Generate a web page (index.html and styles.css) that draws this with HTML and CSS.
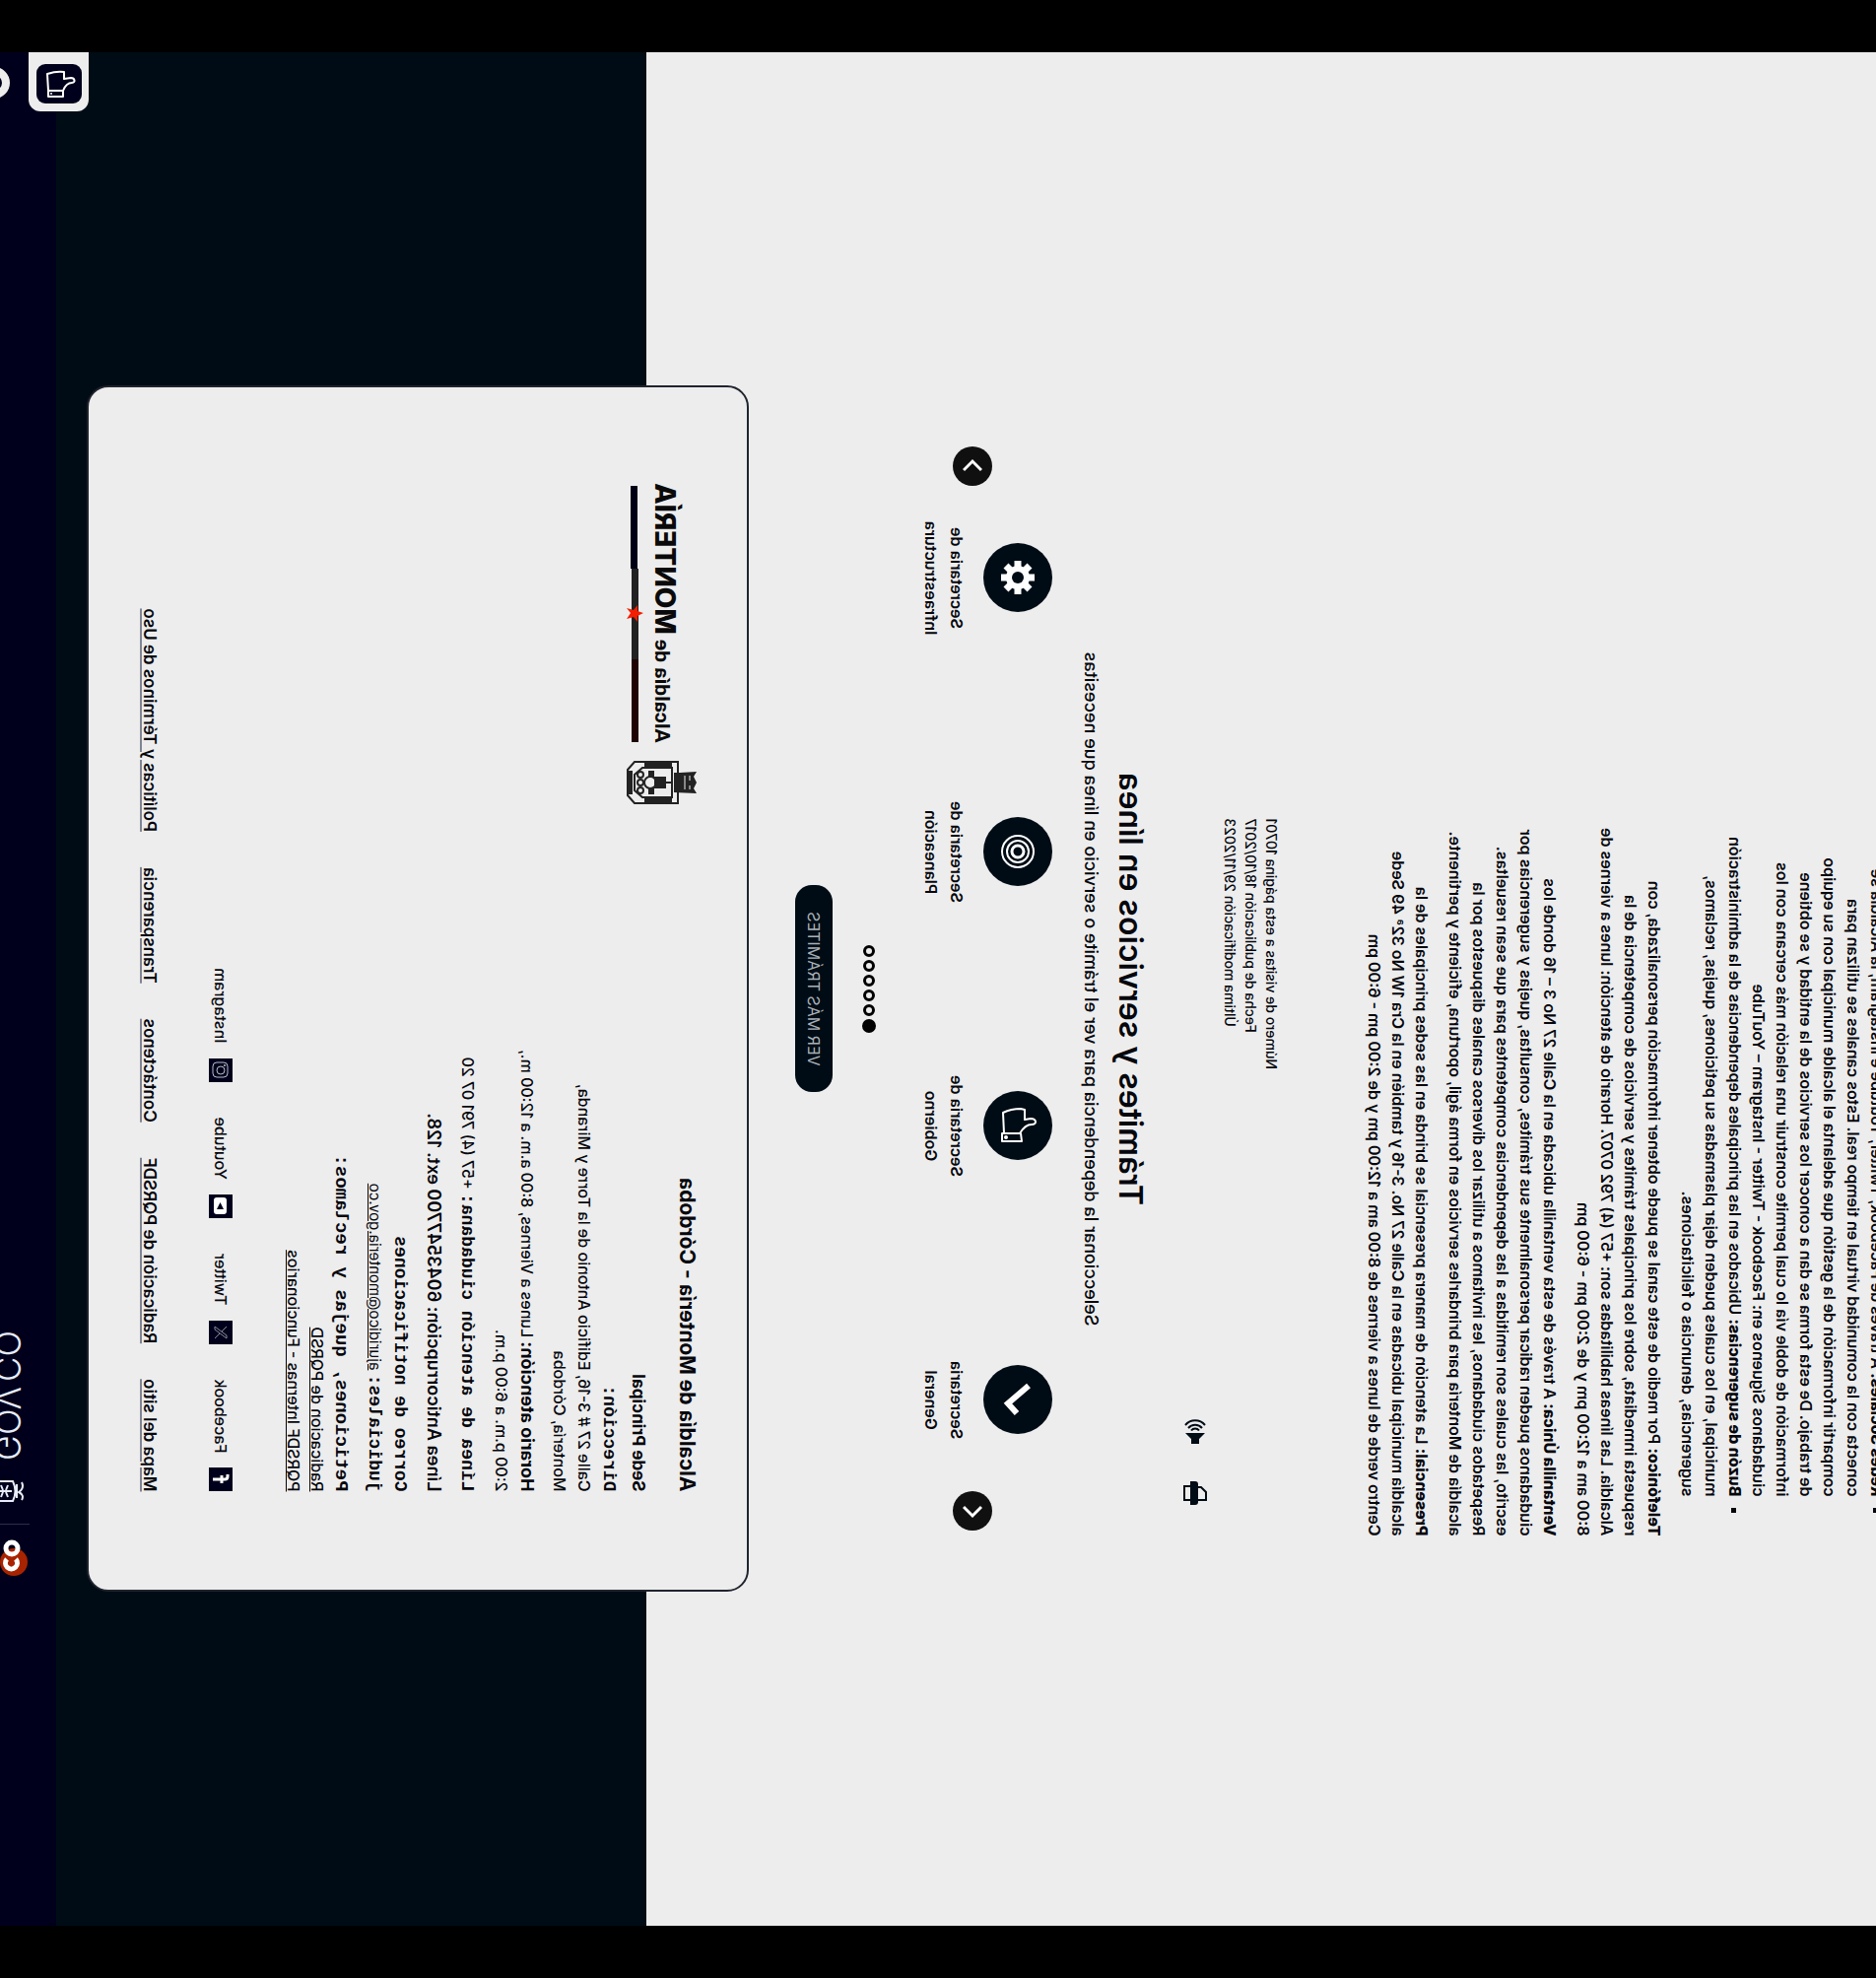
FILE: index.html
```html
<!DOCTYPE html>
<html lang="es">
<head>
<meta charset="utf-8">
<title>Alcaldía de Montería - Canales de atención</title>
<link rel="stylesheet" href="styles.css">
</head>
<body>
<div class="stage">
  <div class="page">
    <main class="main">
      <article class="column article">
        <ul class="channels">
          <li><strong>Redes Sociales:</strong> A través de Facebook, Twitter, Youtube e Instagram, la Alcaldía se<br>conecta con la comunidad virtual en tiempo real. Estos canales se utilizan para<br>compartir información de la gestión que adelanta el alcalde municipal con su equipo<br>de trabajo. De esta forma se dan a conocer los servicios de la entidad y se obtiene<br>información de doble vía lo cual permite construir una relación más cercana con los<br>ciudadanos Síguenos en: Facebook - Twitter - Instagram – YouTube</li>
          <li><strong>Buzón de sugerencias:</strong> Ubicados en las principales dependencias de la administración<br>municipal, en los cuales pueden dejar plasmadas su peticiones, quejas, reclamos,<br>sugerencias, denuncias o felicitaciones.</li>
        </ul>
        <p><strong>Telefónico:</strong> Por medio de este canal se puede obtener información personalizada, con<br>respuesta inmediata, sobre los principales trámites y servicios de competencia de la<br>Alcaldía. Las líneas habilitadas son: +57 (4) 792 0707. Horario de atención: lunes a viernes de<br>8:00 am a 12:00 pm y de 2:00 pm - 6:00 pm</p>
        <p><strong>Ventanilla Única:</strong> A través de esta ventanilla ubicada en la Calle 27 No 3 – 16 donde los<br>ciudadanos pueden radicar personalmente sus trámites, consultas, quejas y sugerencias por<br>escrito, las cuales son remitidas a las dependencias competentes para que sean resueltas.<br>Respetados ciudadanos, les invitamos a utilizar los diversos canales dispuestos por la<br>alcaldía de Montería para brindarles servicios en forma ágil, oportuna, eficiente y pertinente.</p>
        <p><strong>Presencial:</strong> La atención de manera presencial se brinda en las sedes principales de la<br>alcaldía municipal ubicadas en la Calle 27 No. 3-16 y también en la Cra 1W No 32ª 49 Sede<br>Centro verde de lunes a viernes de 8:00 am a 12:00 pm y de 2:00 pm - 6:00 pm</p>
      </article>
      <div class="column stats">
        <p>Número de visitas a esta página 10701</p>
        <p>Fecha de publicación 18/10/2017</p>
        <p>Última modificación 29/11/2023</p>
      </div>
      <div class="column tools">
        <button type="button" aria-label="Imprimir"><svg width="26" height="24" viewBox="0 0 26 24"><path d="M6 10V1h8l5 5v4" fill="#ededed" stroke="#000c15" stroke-width="2"/><path d="M4 9h18a3 3 0 0 1 3 3v5H1v-5a3 3 0 0 1 3-3z" fill="#000c15"/><path d="M6 16h14v7H6z" fill="#ededed" stroke="#000c15" stroke-width="2"/></svg></button>
        <button type="button" aria-label="Escuchar"><svg width="26" height="24" viewBox="0 0 26 24"><path d="M1 8h5l6-6v20l-6-6H1z" fill="#000c15"/><path d="M14.500 8a5 5 0 0 1 0 8M17 5a9 9 0 0 1 0 14M20 2a13 13 0 0 1 0 20" fill="none" stroke="#000c15" stroke-width="2"/></svg></button>
      </div>
      <section class="services">
        <h2>Trámites y servicios en línea</h2>
        <p class="lead">Seleccionar la dependencia para ver el trámite o servicio en línea que necesitas</p>
        <div class="carousel">
          <button type="button" class="arrow" aria-label="Anterior"><svg width="20" height="20" viewBox="0 0 20 20"><path d="M14 1 5 10l9 9" fill="none" stroke="#fff" stroke-width="3"/></svg></button>
          <ul class="slides">
            <li><a href="#general"><span class="disc"><svg width="40" height="40" viewBox="0 0 40 40"><path d="M6 21l10 9L34 9" fill="none" stroke="#fff" stroke-width="6"/></svg></span>Secretaria<br>General</a></li>
            <li><a href="#gobierno"><span class="disc"><svg width="40" height="40" viewBox="0 0 40 40"><path d="M12 18c5-3 9-7 9-12 0-6 6-5 6 1l-1 6h10l1 4c0 8-2 14-4 18l-21-1M4 16l8 1v19H4z" fill="none" stroke="#fff" stroke-width="2" stroke-linejoin="round"/><circle cx="8" cy="32" r="2" fill="#fff"/></svg></span>Secretaria de<br>Gobierno</a></li>
            <li><a href="#planeacion"><span class="disc"><svg width="40" height="40" viewBox="0 0 40 40"><g fill="none" stroke="#fff" stroke-width="2"><circle cx="20" cy="20" r="16"/><circle cx="20" cy="20" r="11"/></g><circle cx="20" cy="20" r="6" fill="none" stroke="#fff" stroke-width="3"/></svg></span>Secretaria de<br>Planeación</a></li>
            <li><a href="#infraestructura"><span class="disc"><svg width="40" height="40" viewBox="0 0 40 40"><circle cx="20" cy="20" r="12" fill="#fff"/><path d="M20 3v34M3 20h34M8 8l24 24M32 8 8 32" stroke="#fff" stroke-width="7"/><circle cx="20" cy="20" r="6" fill="#000c15"/></svg></span>Secretaria de<br>Infraestructura</a></li>
          </ul>
          <button type="button" class="arrow" aria-label="Siguiente"><svg width="20" height="20" viewBox="0 0 20 20"><path d="M6 1l9 9-9 9" fill="none" stroke="#fff" stroke-width="3"/></svg></button>
        </div>
        <div class="dots"><i class="on"></i><i></i><i></i><i></i><i></i><i></i></div>
        <button type="button" class="more">VER MÁS TRÁMITES</button>
      </section>
    </main>
    <footer class="footer">
      <div class="card">
        <div class="top">
          <address class="info">
            <h3>Alcaldía de Montería - Córdoba</h3>
            <p class="sede">Sede Principal</p>
            <p class="near"><b class="mono">Dirección:</b><br>Calle 27 # 3-16, Edificio Antonio de la Torre y Miranda,<br>Montería, Córdoba</p>
            <p class="hours"><b>Horario atención:</b> Lunes a Viernes, 8:00 a.m. a 12:00 m.,<br>2:00 p.m. a 6:00 p.m.</p>
            <p><b class="mono">Línea de atención ciudadana:</b> +57 (4) 791 07 20</p>
            <p class="anti"><b>Línea Anticorrupción: 6043547700 ext. 128.</b></p>
            <p class="judicial"><b class="mono">Correo de notificaciones<br>judiciales:</b> <a href="mailto:ajuridico@monteria.gov.co">ajuridico@monteria.gov.co</a></p>
            <p class="requests"><b class="mono">Peticiones, quejas y reclamos:</b><br><a href="#pqrsd">Radicacion de PQRSD</a><br><a href="#internas">PQRSDF Internas - Funcionarios</a></p>
          </address>
          <div class="logo">
            <svg class="crest" width="44" height="72" viewBox="0 0 44 72"><g fill="none" stroke="#222" stroke-width="2"><path d="M1 20h42v44l-8 7H9l-8-7z"/><path d="M7 26h30v30l-7 8H14l-7-8z"/><circle cx="22" cy="48" r="6"/><circle cx="14" cy="58" r="3"/><circle cx="30" cy="58" r="3"/><circle cx="22" cy="58" r="3"/><path d="M11 46h6M27 46h6M22 26v16"/></g><path d="M11 1l5 3 6-3 6 3 5-3-1 17v6H12zM2 26h4v28H2zM38 26h4v28h-4zM10 66h24v4H10zM16 32h12v12H16zM10 44h7v6h-7zM27 44h7v6h-7z" fill="#222"/><path d="M15 8h4M24 8h5M15 13h14" stroke="#ededed"/></svg>
            <div class="name">
              <span>Alcaldía de <b>MONTERÍA</b></span>
              <svg class="flag" width="260" height="18" viewBox="0 0 260 18"><path d="M0 5h84v7H0z" fill="#200203"/><path d="M84 5h92v7H84z" fill="#222"/><path d="M176 6h84v7h-84z" fill="#000014"/><path d="M131 0l2 6h6l-5 4 2 7-5-4-6 4 2-7-5-4h6z" fill="#f51e00"/></svg>
            </div>
          </div>
        </div>
        <ul class="social">
          <li><a href="#facebook"><svg width="24" height="24" viewBox="0 0 24 24"><path d="M0 0h24v24H0z" fill="#00001c"/><path d="M17 5h-2q-3 0-3 3v12M8 11h8" fill="none" stroke="#fff" stroke-width="3"/></svg>Facebook</a></li>
          <li><a href="#twitter"><svg width="24" height="24" viewBox="0 0 24 24"><path d="M0 0h24v24H0z" fill="#00001c"/><path d="M6 6h3l9 12h-3zM18 6l-5 5M11 13l-5 5" fill="none" stroke="#8a8a99"/></svg>Twitter</a></li>
          <li><a href="#youtube"><svg width="24" height="24" viewBox="0 0 24 24"><path d="M0 0h24v24H0z" fill="#00001c"/><rect x="4" y="6" width="17" height="13" rx="3" fill="#fff"/><path d="M9 9l7 3.500-7 3.500z" fill="#00001c"/></svg>Youtube</a></li>
          <li><a href="#instagram"><svg width="24" height="24" viewBox="0 0 24 24"><path d="M0 0h24v24H0z" fill="#00001c"/><g fill="none" stroke="#b9bfc9"><rect x="5" y="5" width="15" height="15" rx="4"/><circle cx="12" cy="12" r="4"/></g><circle cx="17" cy="8" r="1" fill="#b9bfc9"/></svg>Instagram</a></li>
        </ul>
        <nav class="links">
          <a href="#mapa">Mapa del sitio</a>
          <a href="#radicacion">Radicación de PQRSDF</a>
          <a href="#contacto">Contáctenos</a>
          <a href="#transparencia">Transparencia</a>
          <a href="#politicas">Políticas y Términos de Uso</a>
        </nav>
      </div>
    </footer>
    <div class="govbar">
      <svg class="marca" width="37" height="34" viewBox="0 0 37 34"><circle cx="14" cy="16" r="14" fill="#a82400"/><g fill="none" stroke="#fff" stroke-width="5"><path d="M17 14a6 6 0 1 0 0 9"/><circle cx="28" cy="18" r="6"/></g></svg>
      <span class="rule"></span>
      <svg class="shield" width="24" height="34" viewBox="0 0 24 34"><g fill="none" stroke="#e6ecf8" stroke-width="2"><path d="M3 3q5-3 8 3q4-6 10-3M5 8h14M2 12q10-5 20 0v13q-3 7-10 8-7-1-10-8z"/><path d="M6 17l5 2M18 17l-5 2M12 13v18M6 24l5-2M18 24l-5-2"/></g></svg>
      <span class="gov">GOV.CO</span>
    </div>
    <button type="button" class="thumb" aria-label="Me gusta"><svg width="40" height="46" viewBox="0 0 40 46"><rect width="40" height="46" rx="9" fill="#00001c"/><path d="M13 19c5-2 8-5 8-9 0-4 5-3 5 1l-1 7h7c1 6 0 11-2 17l-17-1M7 19h6v15H7z" fill="none" stroke="#fff" stroke-width="2" stroke-linejoin="round"/><circle cx="10" cy="31" r="1" fill="#fff"/></svg></button>
    <button type="button" class="chat" aria-label="Accesibilidad"></button>
  </div>
</div>
</body>
</html>
```
FILE: styles.css
```css
* { box-sizing: border-box; margin: 0; padding: 0; }

html, body { height: 100%; overflow: hidden; background: #000; }

body { font: 500 16px/24px Inter, "Liberation Sans", sans-serif; color: #05070d; }

a { color: inherit; text-decoration: none; }
ul { list-style: none; }
button { border: 0; background: none; font: inherit; color: inherit; }
svg { display: block; flex: none; }

/* The whole page is turned a quarter and mirrored: lines stack right to left. */
.stage {
  width: 100vh;
  height: 100vw;
  padding: 0 53px;
  transform-origin: 0 0;
  transform: translate(100vw, 100vh) matrix(0, -1, -1, 0, 0, 0);
}

.page {
  position: relative;
  height: 100%;
  display: flex;
  flex-direction: column;
  justify-content: flex-end;
  overflow: hidden;
  background: #ededed;
}

.main { flex: none; padding-bottom: 151px; }

.column { width: 100%; max-width: 1110px; margin: 0 auto; white-space: nowrap; }

.article { font-weight: 600; }
.article strong { font-weight: 800; }
.article p { margin-top: 10px; }
.channels { padding-left: 40px; list-style: square; }

.stats {
  padding-right: 382px;
  margin-top: 82px;
  font-size: 14px;
  line-height: 21px;
  text-align: right;
}

.tools { display: flex; gap: 36px; padding-left: 30px; margin-top: 13px; }

.services { text-align: center; margin-top: 36px; }
.services h2 { font-size: 32px; line-height: 36px; font-weight: 600; }
.lead { margin-top: 10px; font-size: 18px; }

.carousel {
  display: flex;
  justify-content: center;
  align-items: flex-start;
  margin-top: 27px;
}
.arrow {
  position: relative;
  z-index: 1;
  flex: none;
  width: 40px;
  height: 40px;
  margin-top: 61px;
  border-radius: 50%;
  background: #101010;
  display: flex;
  align-items: center;
  justify-content: center;
}
.slides { display: flex; flex: 0 1 1112px; margin: 0 -46px; line-height: 26px; }
.slides li { flex: 1; font-weight: 600; }
.slides a { display: block; }
.disc {
  display: flex;
  align-items: center;
  justify-content: center;
  width: 70px;
  height: 70px;
  margin: 0 auto 14px;
  border-radius: 50%;
  background: #000c15;
}

.dots { display: flex; justify-content: center; align-items: center; gap: 3px; height: 14px; margin-top: 43px; }
.dots i { width: 12px; height: 12px; border: 3px solid #000; border-radius: 50%; }
.dots .on { width: 14px; height: 14px; background: #000; }

.more {
  width: 210px;
  height: 38px;
  margin-top: 30px;
  border-radius: 17px;
  background: #000c15;
  color: #a9b0b8;
  font-weight: 400;
}

.footer { flex: none; padding-bottom: 31px; background: #000c15; }
.card {
  width: 100%;
  max-width: 1224px;
  margin: -104px auto 0;
  padding: 47px 100px 50px;
  border: 2px solid #20242e;
  border-radius: 22px;
  background: #ededed;
  white-space: nowrap;
}
.top { display: flex; justify-content: space-between; }
.info { font-style: normal; line-height: 26px; }
.info h3 { font-size: 21px; line-height: 28px; font-weight: 700; }
.info p { margin-top: 8px; }
.info b { font-size: 18px; }
.info .sede { margin-top: 23px; font-size: 17px; line-height: 24px; font-weight: 700; }
.info .near { margin-top: 5px; line-height: 25px; }
.info .hours { margin-top: 7px; }
.info .anti b { font-weight: 600; }
.info .mono { font-family: "Liberation Mono", monospace; }
.info a { text-decoration: underline; }
.info .judicial { line-height: 25px; }
.info .judicial a { font-size: 15px; font-weight: 400; }
.info .requests { line-height: 24px; }
.info .requests .mono { font-size: 19px; }

.logo { display: flex; align-items: flex-start; gap: 19px; }
.crest { margin-top: 3px; }
.name { width: 260px; padding-top: 19px; font: 700 21px/34px Roboto, sans-serif; color: #0a0a0a; }
.name b { font: 800 28px/34px Inter, sans-serif; }
.name .flag { margin-top: 2px; }

.social { display: flex; gap: 36px; margin-top: 50px; }
.social a { display: flex; gap: 15px; }

.links { display: flex; gap: 36px; margin-top: 48px; font-size: 17px; font-weight: 600; }
.links a { text-decoration: underline 2px #808393; text-underline-offset: 2px; }

.govbar {
  flex: none;
  display: flex;
  align-items: flex-start;
  height: 57px;
  padding: 27px 0 0 355px;
  background: #00001c;
  overflow: hidden;
}
.rule { width: 1px; height: 32px; margin: 0 21px 0 15px; background: #2a2d4a; }
.shield { margin: 5px 19px 0 0; }
.gov { color: #e6ecf8; font-size: 35px; line-height: 44px; font-weight: 300; }

.thumb {
  position: absolute;
  right: 0;
  bottom: 29px;
  padding: 7px 12px 8px 8px;
  border-radius: 12px 0 0 12px;
  background: #ededed;
}
.chat {
  position: absolute;
  right: 15px;
  bottom: -22px;
  width: 32px;
  height: 32px;
  border: 8px solid #ededed;
  border-radius: 50%;
  background: #00001c;
}
```
